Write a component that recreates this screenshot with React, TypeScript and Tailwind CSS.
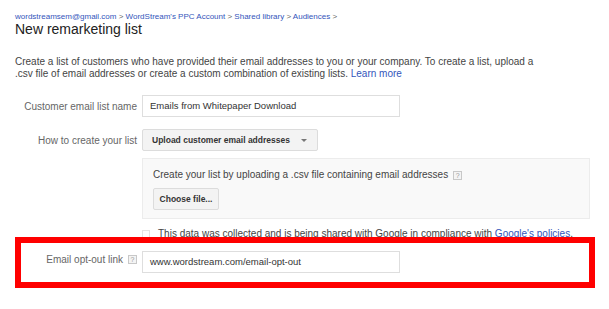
import React from "react";

const Help = () => (
  <span className="inline-flex items-center justify-center w-[9px] h-[9px] border border-[#c8c8c8] bg-[#f4f4f4] text-[7px] leading-none text-[#999] align-middle ml-[5px]">?</span>
);

export default function App() {
  return (
    <div className="relative w-[609px] h-[309px] bg-white overflow-hidden" style={{ fontFamily: '"Liberation Sans", Arial, sans-serif' }}>
      <div className="pl-[15px] pt-[12px]">
        <div className="text-[8px] leading-[10px] text-[#3355bb]">
          wordstreamsem@gmail.com <span className="text-[#666]">&gt;</span> WordStream's PPC Account <span className="text-[#666]">&gt;</span> Shared library <span className="text-[#666]">&gt;</span> Audiences <span className="text-[#666]">&gt;</span>
        </div>
        <div className="text-[14px] leading-[15px] text-[#222]">New remarketing list</div>
        <p className="mt-[19px] text-[10px] leading-[12px] text-[#444] w-[525px]">
          Create a list of customers who have provided their email addresses to you or your company. To create a list, upload a .csv file of email addresses or create a custom combination of existing lists. <span className="text-[#3355bb]">Learn more</span>
        </p>

        <div className="mt-[15px] flex items-center gap-[5px]">
          <div className="w-[122px] text-right text-[10px] text-[#666]">Customer email list name</div>
          <div className="w-[258px] h-[22px] border border-[#dedede] flex items-center pl-[7px] text-[9.5px] text-[#333]">Emails from Whitepaper Download</div>
        </div>

        <div className="mt-[12px] flex items-center gap-[5px]">
          <div className="w-[122px] text-right text-[10px] text-[#666]">How to create your list</div>
          <div className="w-[176px] h-[22px] border border-[#dcdcdc] bg-[#f3f3f3] rounded-[2px] flex items-center pl-[9px] pr-[10px] justify-between text-[8.5px] font-bold text-[#333]">
            <span>Upload customer email addresses</span>
            <span className="w-0 h-0 border-l-[3px] border-r-[3px] border-t-[3px] border-l-transparent border-r-transparent border-t-[#777]"></span>
          </div>
        </div>

        <div className="mt-[7px] ml-[127px] w-[448px] h-[61px] border border-[#ececec] bg-[#f9f9f9] pl-[10px] pt-[9px]">
          <div className="text-[10px] text-[#444] leading-[14px] flex items-center">Create your list by uploading a .csv file containing email addresses <Help /></div>
          <div className="mt-[6px] w-[66px] h-[22px] border border-[#dcdcdc] bg-[#f3f3f3] rounded-[2px] flex items-center justify-center text-[8.5px] font-bold text-[#333]">Choose file...</div>
        </div>

        <div className="mt-[7px] ml-[127px] flex items-center gap-[8px]">
          <span className="w-[8px] h-[8px] border border-[#e4e4e4] bg-white"></span>
          <span className="text-[10px] text-[#444]">This data was collected and is being shared with Google in compliance with <span className="text-[#3355bb]">Google's policies</span>.</span>
        </div>

        <div className="mt-[10px] flex items-start gap-[5px]">
          <div className="w-[122px] pt-[1px] flex justify-end items-center text-[10px] text-[#666]">Email opt-out link <Help /></div>
          <div className="w-[258px] h-[22px] border border-[#dedede] flex items-center pl-[7px] text-[9.5px] text-[#333]">www.wordstream.com/email-opt-out</div>
        </div>
      </div>

      <div className="absolute left-[15px] top-[237px] w-[580px] h-[51px] border-[6px] border-[#ff0000]"></div>
    </div>
  );
}
